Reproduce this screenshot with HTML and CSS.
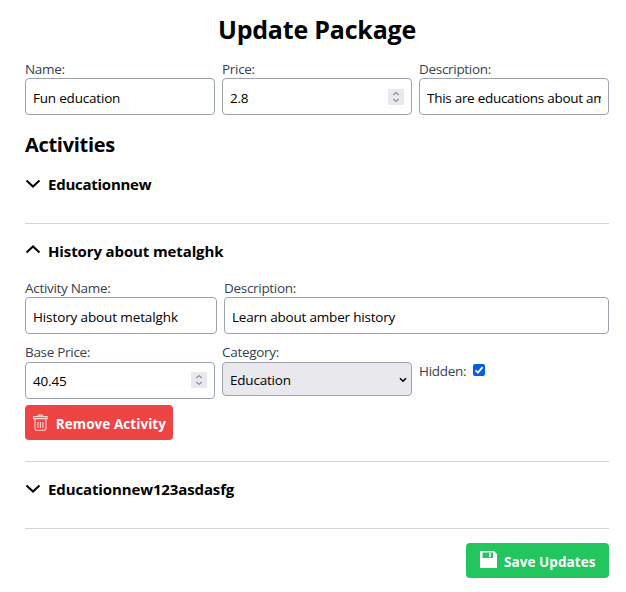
FILE: index.html
```html
<!DOCTYPE html>
<html lang="en">
<head>
<meta charset="utf-8">
<title>Update Package</title>
<link rel="stylesheet" href="styles.css">
</head>
<body>
<form class="page">
  <h1 class="title"><span>Update Package</span></h1>
  <div class="row thirds">
    <div class="field"><label class="label" for="name">Name:</label><input class="input" id="name" value="Fun education"></div>
    <div class="field"><label class="label" for="price">Price:</label>
      <div class="number"><input class="input" id="price" value="2.8"><svg class="spinner" viewBox="0 0 16 16"><path d="M5.300 6 8 3.600 10.700 6M5.300 10 8 12.400 10.700 10"/></svg></div>
    </div>
    <div class="field"><label class="label" for="desc">Description:</label><input class="input long" id="desc" value="This are educations about amber"></div>
  </div>
  <h2 class="subtitle">Activities</h2>

  <section class="activity">
    <h3 class="activity-head"><svg class="chevron" viewBox="0 0 16 16"><path d="M1.500 4.600 8 10.600l6.500-6"/></svg><span class="short">Educationnew</span></h3>
  </section>

  <section class="activity open">
    <h3 class="activity-head"><svg class="chevron up" viewBox="0 0 16 16"><path d="M1.500 10.400 8 4.400l6.500 6"/></svg><span>History about metalghk</span></h3>
    <div class="row split">
      <div class="field"><label class="label" for="aname">Activity Name:</label><input class="input wide" id="aname" value="History about metalghk"></div>
      <div class="field"><label class="label" for="adesc">Description:</label><input class="input" id="adesc" value="Learn about amber history"></div>
    </div>
    <div class="row thirds second">
      <div class="field"><label class="label" for="base">Base Price:</label>
        <div class="number"><input class="input" id="base" value="40.45"><svg class="spinner" viewBox="0 0 16 16"><path d="M5.300 6 8 3.600 10.700 6M5.300 10 8 12.400 10.700 10"/></svg></div>
      </div>
      <div class="field"><label class="label" for="cat">Category:</label>
        <div class="select-wrap"><select class="select" id="cat"><option>Education</option></select><svg class="caret" viewBox="0 0 8 6"><path d="M1 1.200 4 4.200l3-3"/></svg></div>
      </div>
      <div class="hidden-field"><label class="label" for="hid">Hidden:</label><span class="check"><input type="checkbox" class="box" id="hid" checked><svg class="tick" viewBox="0 0 12 12"><path d="M2.500 6.300 4.900 8.700 9.600 3.200"/></svg></span></div>
    </div>
    <button type="button" class="button remove">
      <svg class="trash" viewBox="0 0 15 18"><path d="M.7 3.500h13.600v2H.7zM5 3.500l.6-1.500h3.800l.6 1.500M2 5.500V16l1 1.300h9l1-1.300V5.500M5 9v6M7.500 9v6M10 9v6"/></svg><span>Remove Activity</span>
    </button>
  </section>

  <section class="activity">
    <h3 class="activity-head"><svg class="chevron" viewBox="0 0 16 16"><path d="M1.500 4.600 8 10.600l6.500-6"/></svg><span>Educationnew123asdasfg</span></h3>
  </section>

  <div class="actions">
    <button type="button" class="button save">
      <svg class="disk" viewBox="0 0 17 17"><path fill-rule="evenodd" d="M0 0h14l3 3v14H0zM2.500 1.500V7H13V1.500zM9 2.300h2v4H9z"/></svg><span>Save Updates</span>
    </button>
  </div>
</form>
</body>
</html>
```
FILE: styles.css
```css
* { box-sizing: border-box; }

body {
  margin: 0;
  background: #fff;
  color: #000;
  font-family: "Open Sans", "Noto Sans", sans-serif;
  font-size: 13.5px;
}

.page { padding: 11px 17px 0 25px; }

.title {
  margin: 0 0 13px;
  height: 36px;
  font-size: 25px;
  line-height: 36px;
  letter-spacing: -0.2px;
  text-align: center;
}

.row { display: grid; column-gap: 7px; }
.thirds { grid-template-columns: repeat(3, 1fr); }
.split { grid-template-columns: 192px 1fr; }

.label {
  display: block;
  height: 18px;
  line-height: 18px;
  color: #374151;
  letter-spacing: -0.3px;
  white-space: nowrap;
}

.input, .select {
  display: block;
  width: 100%;
  height: 37px;
  margin: 0;
  padding: 3px 7px 0;
  border: 1px solid #9ca3af;
  border-radius: 4px;
  background: #fff;
  color: #000;
  font: inherit;
  letter-spacing: -0.2px;
  outline: 0;
}
.input.long { letter-spacing: -0.28px; }
.input.wide { letter-spacing: -0.12px; }

.number, .select-wrap, .check { position: relative; }

.spinner {
  position: absolute;
  top: 11px;
  right: 8px;
  width: 16px;
  height: 16px;
  background: #e9e9ed;
}
.second .spinner { top: 10px; }
.second .input { padding-top: 1px; }

.spinner path, .caret path, .tick path, .chevron path, .trash path { fill: none; }
.spinner path { stroke: #8f8f9d; stroke-width: 1.3; }

.subtitle {
  margin: 15px 0 0;
  height: 30px;
  font-size: 20px;
  line-height: 30px;
  letter-spacing: -0.3px;
}

.activity {
  height: 67px;
  padding-top: 15px;
  border-bottom: 1px solid #d1d5db;
}
.subtitle + .activity { height: 64px; padding-top: 12px; }
.activity.open { height: 238px; }

.activity-head {
  display: flex;
  align-items: center;
  gap: 7px;
  height: 24px;
  margin: 0;
  font-size: 15px;
  letter-spacing: -0.12px;
}
.short { letter-spacing: -0.25px; }

.chevron { width: 16px; height: 16px; margin-top: -1px; }
.chevron.up { margin-top: -2px; }
.chevron path { stroke: #000; stroke-width: 2; }

.split { margin-top: 16px; }
.second { margin-top: 9px; }
.second .label { height: 19px; }

.select { height: 34px; padding: 1px 7px 0; background: #e9e9ed; appearance: none; }
.caret { position: absolute; top: 15px; right: 5px; width: 8px; height: 6px; }
.caret path { stroke: #000; stroke-width: 1.6; }

.hidden-field { display: flex; gap: 7px; padding-top: 19px; }
.check { width: 12px; height: 12px; margin-top: 2px; }
.box { display: block; appearance: none; width: 12px; height: 12px; margin: 0; border-radius: 2px; background: #0060df; }
.tick { position: absolute; top: 0; left: 0; width: 12px; height: 12px; }
.tick path { stroke: #fff; stroke-width: 1.8; }

.button {
  display: flex;
  align-items: center;
  height: 35px;
  padding: 3px 7px 0 8px;
  border: 0;
  border-radius: 4px;
  color: #fff;
  font: bold 13.5px "Open Sans", "Noto Sans", sans-serif;
  letter-spacing: 0.06px;
  white-space: nowrap;
}
.remove { width: 148px; margin-top: 6px; gap: 8px; background: #ef4444; }
.trash { width: 15px; height: 18px; margin-top: -4px; opacity: .75; }
.trash path { stroke: #fff; stroke-width: 1.2; }

.actions { display: flex; justify-content: flex-end; padding-top: 14px; }
.save { width: 143px; padding-left: 14px; gap: 7px; background: #22c55e; }
.disk { width: 17px; height: 17px; margin-top: -5px; fill: #fff; }
```
